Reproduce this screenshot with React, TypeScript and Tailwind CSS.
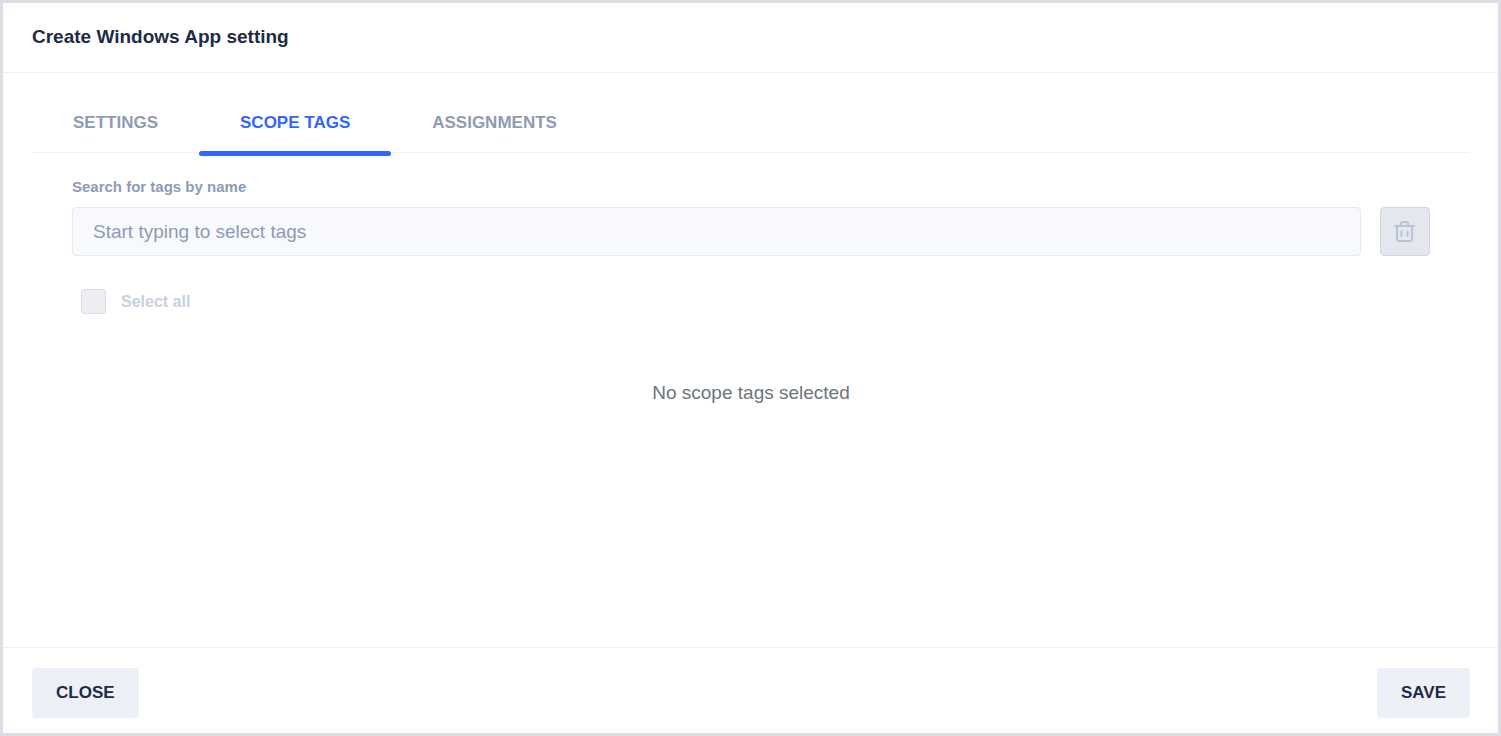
import { useState } from "react";
import clsx from "clsx";

const TABS = ["Settings", "Scope tags", "Assignments"];

function TrashIcon() {
  return (
    <svg width="22" height="21" viewBox="0 0 22 21" fill="none" stroke="#bac2d5" strokeWidth="2" strokeLinecap="round" strokeLinejoin="round" aria-hidden="true">
      <path d="M1 5h19" />
      <path d="M3 5v13a2 2 0 0 0 2 2h11a2 2 0 0 0 2-2V5" />
      <path d="M7 5V3a2 2 0 0 1 2-2h3a2 2 0 0 1 2 2v2" />
      <path d="M7.5 10.5v4.5M13.5 10.5v4.5" />
    </svg>
  );
}

function ScopeTags() {
  const [query, setQuery] = useState("");

  return (
    <div className="px-10">
      <label htmlFor="tag-search" className="mt-6 block text-[15px] leading-5 font-bold text-[#8f9bb3]">
        Search for tags by name
      </label>
      <div className="mt-[10px] flex gap-[19px]">
        <input
          id="tag-search"
          type="text"
          value={query}
          onChange={(e) => setQuery(e.target.value)}
          placeholder="Start typing to select tags"
          className="h-[49px] min-w-0 flex-1 rounded border border-[#e4e9f2] bg-[#f7f9fc] px-5 text-[19px] placeholder:text-[#8f9bb3]"
        />
        <button
          type="button"
          disabled
          aria-label="Remove selected tags"
          className="flex h-[49px] w-[50px] items-center justify-center rounded border border-[#d0d6e2] bg-[#e4e7ee]"
        >
          <TrashIcon />
        </button>
      </div>

      <div className="mt-[33px] flex items-center gap-[15px] pl-[9px]">
        <input
          id="select-all"
          type="checkbox"
          disabled
          className="size-[25px] appearance-none rounded-[3px] border border-[#d9dce6] bg-[#edeef2]"
        />
        <label htmlFor="select-all" className="text-base leading-5 font-bold text-[#c9d0df]">
          Select all
        </label>
      </div>

      <p className="mt-[65px] text-center text-[19px] leading-7 text-[#6c757d]">No scope tags selected</p>
    </div>
  );
}

export default function App() {
  const [tab, setTab] = useState("Scope tags");

  return (
    <div className="flex min-h-screen flex-col border-[3px] border-[#dddde3] bg-white font-['Liberation_Sans',Arial,sans-serif] text-[#222b45]">
      <header className="border-b border-[#edf1f7] px-[29px] pt-5 pb-[21px]">
        <h1 className="text-[19px] leading-7 font-bold">Create Windows App setting</h1>
      </header>

      <main className="flex-1 pt-[29px] pr-7 pl-[29px]">
        <div role="tablist" className="flex border-b border-[#edf1f7]">
          {TABS.map((name) => (
            <button
              key={name}
              type="button"
              role="tab"
              aria-selected={tab === name}
              onClick={() => setTab(name)}
              className={clsx(
                "relative h-[50px] px-[41px] pb-[9px] text-[17px] font-bold uppercase",
                tab === name ? "text-[#3366ff]" : "text-[#8f9bb3]"
              )}
            >
              {name}
              {tab === name && (
                <span className="absolute inset-x-0 -bottom-1 h-[5px] rounded-full bg-[#3366ff]" />
              )}
            </button>
          ))}
        </div>
        {tab === "Scope tags" && <ScopeTags />}
      </main>

      <footer className="flex justify-between border-t border-[#edf1f7] pt-5 pr-7 pb-[15px] pl-[29px]">
        <button type="button" className="h-[50px] rounded bg-[#edf1f7] px-6 text-[17px] font-bold uppercase">
          Close
        </button>
        <button type="button" className="h-[50px] rounded bg-[#edf1f7] px-6 text-[17px] font-bold uppercase">
          Save
        </button>
      </footer>
    </div>
  );
}
